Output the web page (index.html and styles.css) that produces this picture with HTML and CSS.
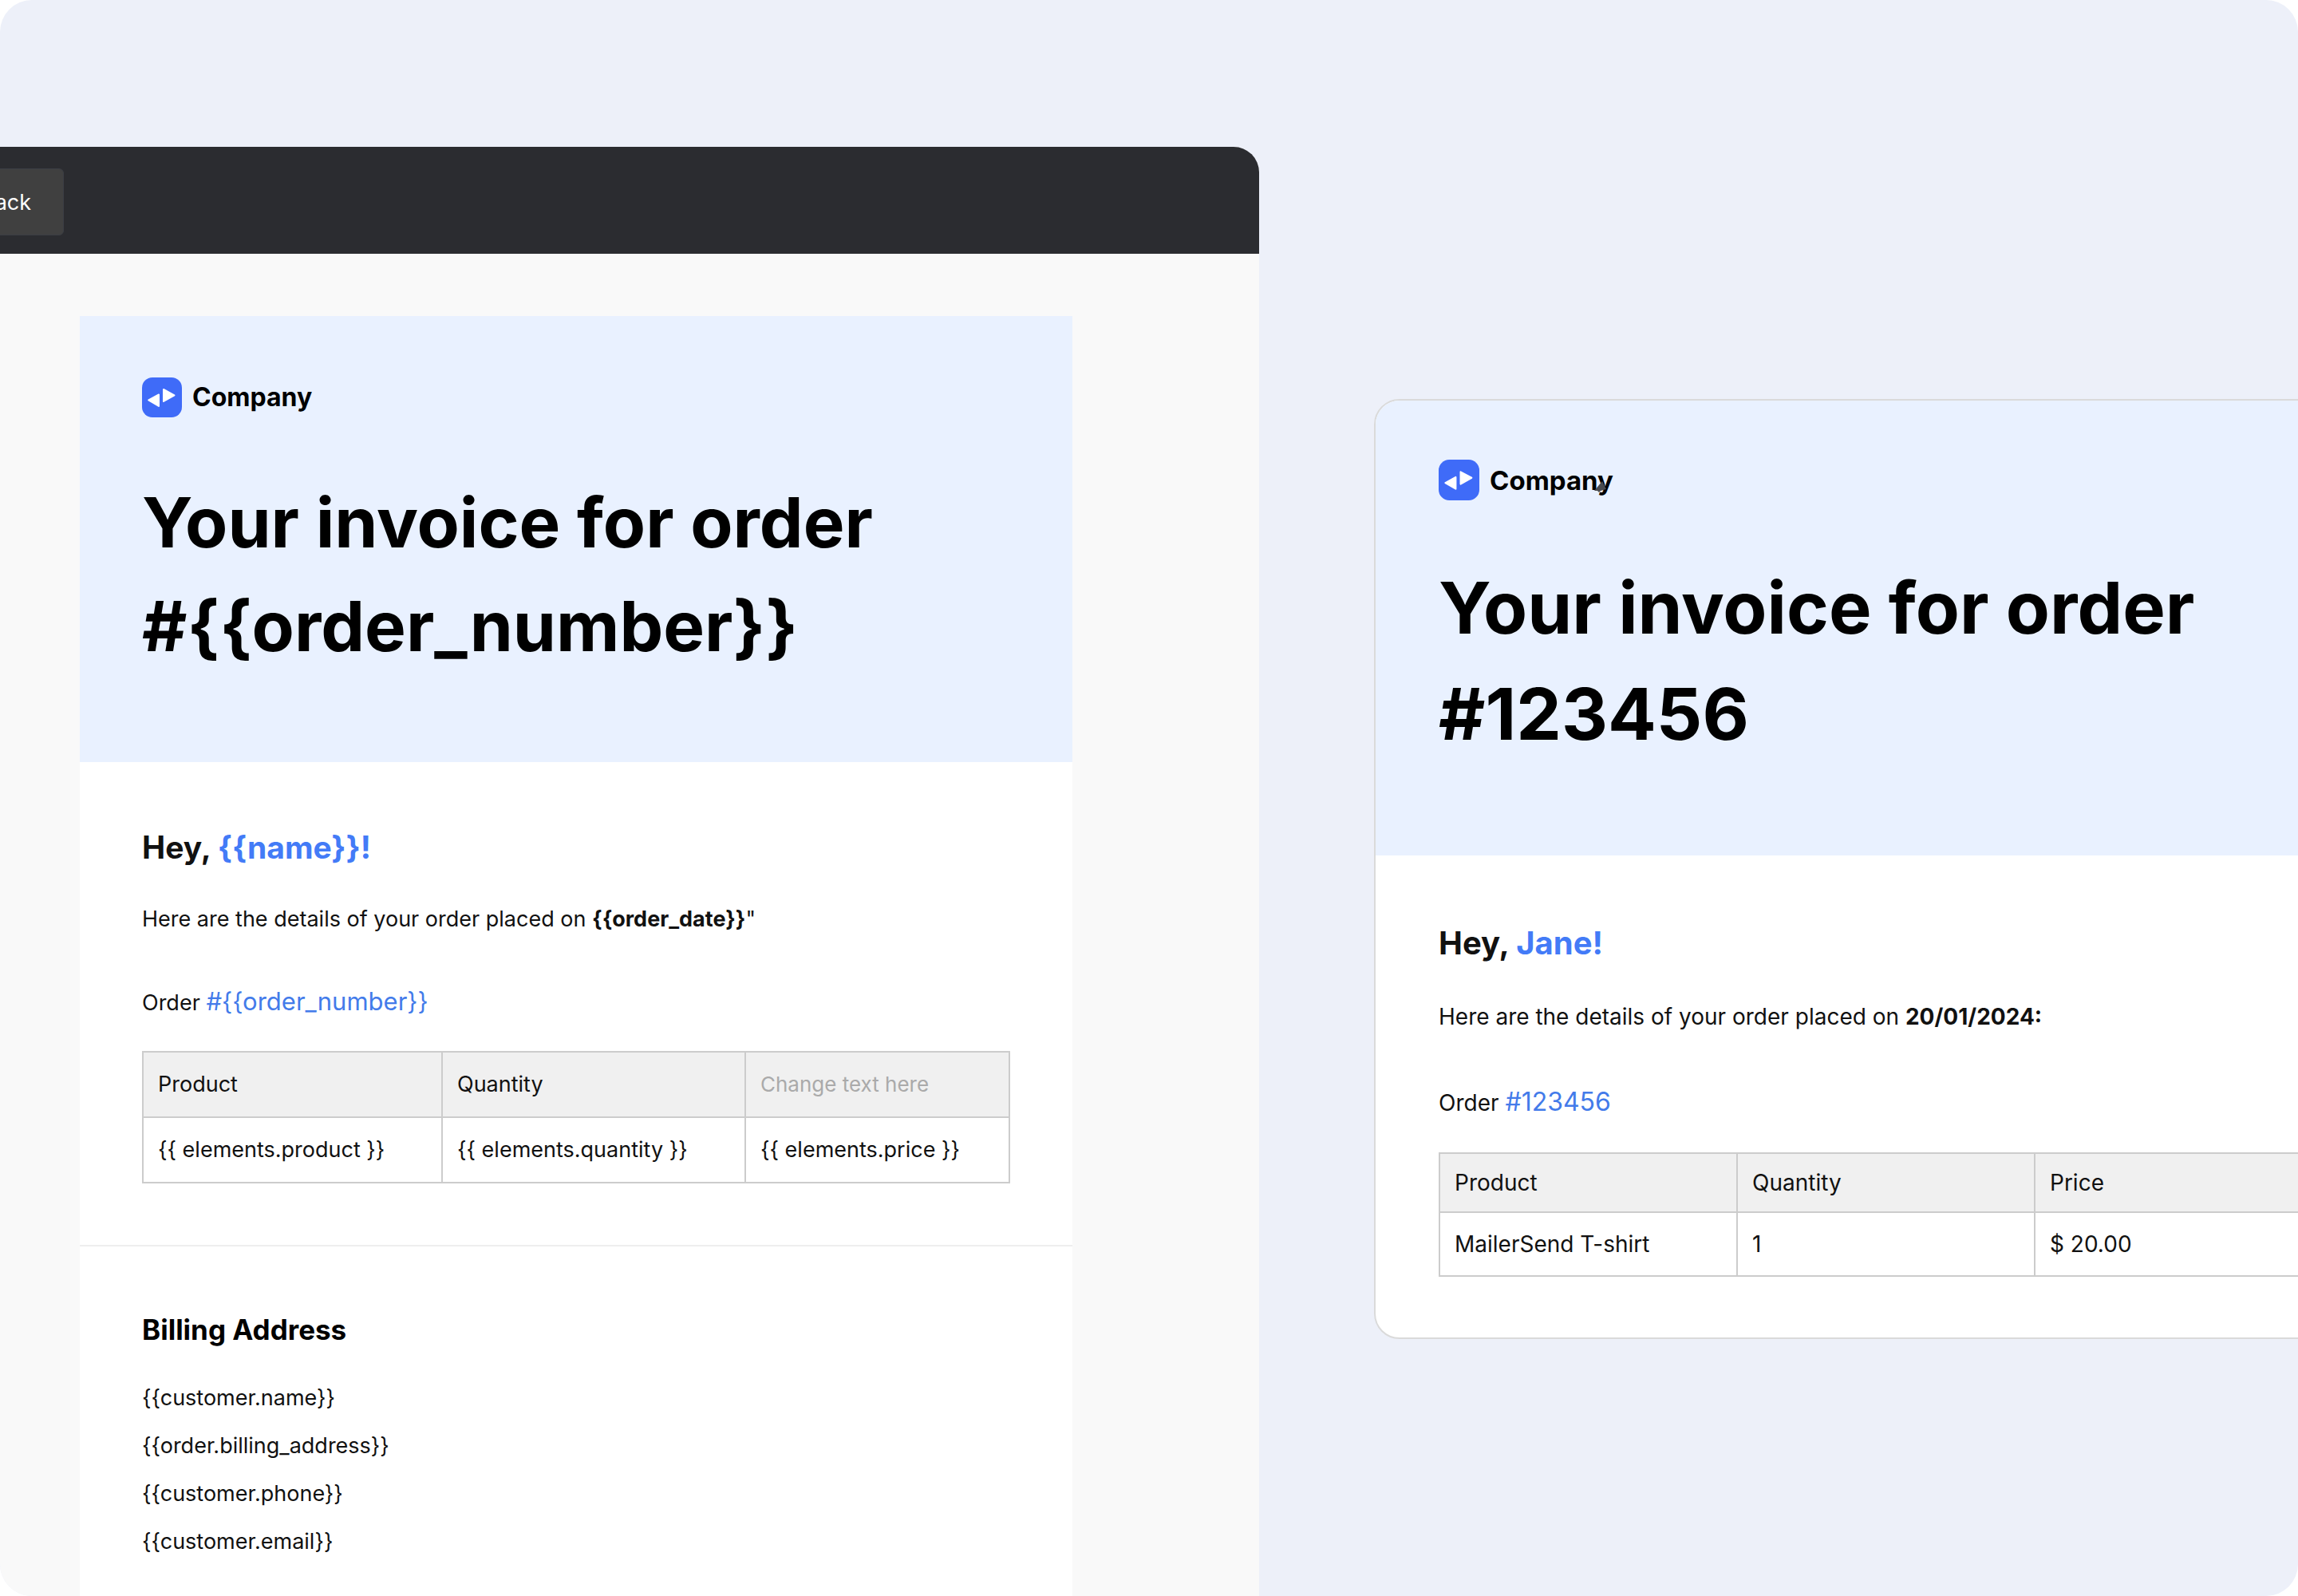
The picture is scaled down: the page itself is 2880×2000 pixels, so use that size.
FILE: index.html
```html
<!DOCTYPE html>
<html lang="en">
<head>
    <meta charset="UTF-8">
    <meta name="viewport" content="width=device-width, initial-scale=1.0">
    <title>Invoice template</title>
    <link rel="stylesheet" href="styles.css">
</head>
<body>
    <main class="stage">
        <!-- Template editor -->
        <section class="editor">
            <header class="toolbar">
                <button type="button" class="back">Back</button>
            </header>
            <article class="email">
                <div class="hero">
                    <div class="brand">
                        <svg class="logo" viewBox="0 0 50 50" aria-hidden="true">
                            <rect width="50" height="50" rx="13" fill="#3f6bf8"/>
                            <path d="M8.200 28.500 L21 21.500 L21 36 Z M27 15 L40.500 22.300 L27 30 Z" fill="#fff" stroke="#fff" stroke-width="2" stroke-linejoin="round"/>
                        </svg>
                        <span>Company</span>
                    </div>
                    <h1>Your invoice for order<br>#{{order_number}}</h1>
                </div>
                <div class="details">
                    <h2>Hey, <span class="accent">{{name}}!</span></h2>
                    <p class="intro">Here are the details of your order placed on <strong>{{order_date}}</strong>"</p>
                    <p class="order">Order <a href="#">#{{order_number}}</a></p>
                    <table>
                        <colgroup>
                            <col class="col-product">
                            <col class="col-quantity">
                            <col>
                        </colgroup>
                        <tr>
                            <th>Product</th>
                            <th>Quantity</th>
                            <th><input type="text" class="cell-input" placeholder="Change text here" aria-label="Column title"></th>
                        </tr>
                        <tr>
                            <td>{{ elements.product }}</td>
                            <td>{{ elements.quantity }}</td>
                            <td>{{ elements.price }}</td>
                        </tr>
                    </table>
                </div>
                <div class="billing">
                    <h3>Billing Address</h3>
                    <p>{{customer.name}}</p>
                    <p>{{order.billing_address}}</p>
                    <p>{{customer.phone}}</p>
                    <p>{{customer.email}}</p>
                </div>
            </article>
        </section>

        <!-- Rendered email -->
        <article class="email preview">
            <div class="hero">
                <div class="brand">
                    <svg class="logo" viewBox="0 0 50 50" aria-hidden="true">
                        <rect width="50" height="50" rx="13" fill="#3f6bf8"/>
                        <path d="M8.200 28.500 L21 21.500 L21 36 Z M27 15 L40.500 22.300 L27 30 Z" fill="#fff" stroke="#fff" stroke-width="2" stroke-linejoin="round"/>
                    </svg>
                    <span>Company</span>
                    <svg class="pointer" viewBox="0 0 16 14" aria-hidden="true">
                        <path d="M0 12 L10 0 L15 10 L8 12 L6 14 L4 12 Z" fill="#4a4c50"/>
                    </svg>
                </div>
                <h1>Your invoice for order<br>#123456</h1>
            </div>
            <div class="details">
                <h2>Hey, <span class="accent">Jane!</span></h2>
                <p class="intro">Here are the details of your order placed on <strong>20/01/2024:</strong></p>
                <p class="order">Order <a href="#">#123456</a></p>
                <table>
                    <colgroup>
                        <col class="col-product">
                        <col class="col-quantity">
                        <col>
                    </colgroup>
                    <tr>
                        <th>Product</th>
                        <th>Quantity</th>
                        <th>Price</th>
                    </tr>
                    <tr>
                        <td>MailerSend T-shirt</td>
                        <td>1</td>
                        <td>$ 20.00</td>
                    </tr>
                </table>
            </div>
        </article>
    </main>
</body>
</html>
```
FILE: styles.css
```css
* {
    box-sizing: border-box;
}

body {
    margin: 0;
    background-color: #fff;
    font-family: Inter, "Liberation Sans", sans-serif;
    color: #111;
}

h1, h2, h3, p {
    margin: 0;
}

.stage {
    display: grid;
    grid-template-columns: 1578fr 1158fr;
    column-gap: 144px;
    align-items: start;
    height: 100vh;
    overflow: hidden;
    border-radius: 40px;
    background-color: #edf0f9;
}

/* Editor */
.editor {
    min-height: 100vh;
    margin-top: 184px;
    border-top-right-radius: 32px;
    background-color: #f9f9f9;
    overflow: hidden;
}

.toolbar {
    display: flex;
    align-items: center;
    height: 134px;
    padding-top: 4px;
    background-color: #2b2c30;
}

.back {
    height: 84px;
    margin-left: -65px;
    padding: 0 40px;
    border: 1px solid #3b3e44;
    border-radius: 6px;
    background-color: #404040;
    color: #fff;
    font-family: inherit;
    font-size: 27px;
    cursor: pointer;
}

/* Email */
.email {
    --text: 27px;
    --link: 31px;
    --brand: 32px;
    --title: 87px;
    --title-line: 130px;
    --greeting: 39px;
    background-color: #fff;
    font-size: var(--text);
    line-height: 60px;
}

.editor .email {
    margin: 78px 234px 0 100px;
}

.hero {
    padding: 77px 78px 105px;
    background-color: #e9f1ff;
    color: #000;
}

.brand {
    display: flex;
    align-items: center;
    gap: 13px;
    height: 50px;
    margin-bottom: 67px;
    font-size: var(--brand);
    font-weight: 700;
}

.logo {
    width: 50px;
    height: 50px;
}

.email h1 {
    font-size: var(--title);
    line-height: var(--title-line);
    white-space: nowrap;
}

.details {
    padding: 77px 78px;
}

.email h2 {
    font-size: var(--greeting);
}

.accent {
    color: #437bf7;
}

.intro {
    margin-top: 30px;
}

.order {
    margin-top: 43px;
}

.order a {
    color: #437bea;
    font-size: var(--link);
    text-decoration: none;
}

table {
    width: 100%;
    margin-top: 30px;
    border-collapse: collapse;
    table-layout: fixed;
}

.col-product {
    width: 375px;
}

.col-quantity {
    width: 380px;
}

th, td {
    height: 82px;
    padding: 0 18px;
    border: 2px solid #ccc;
    font-weight: 400;
    text-align: left;
}

th {
    background-color: #f0f0f0;
}

.cell-input {
    width: 100%;
    padding: 0;
    border: none;
    background: none;
    font-family: inherit;
    font-size: 26px;
}

.cell-input::placeholder {
    color: #aaa;
}

.billing {
    padding: 74px 78px;
    border-top: 2px solid #eee;
}

.billing h3 {
    margin-bottom: 26px;
    color: #000;
    font-size: 35px;
}

/* Preview card, runs off the right side */
.preview {
    --text: 28px;
    --link: 32px;
    --brand: 33px;
    --title: 90px;
    --title-line: 133px;
    --greeting: 40px;
    margin: 500px -120px 0 0;
    border: 2px solid #dadada;
    border-radius: 32px;
    overflow: hidden;
}

.preview .hero {
    padding: 74px 79px 111px;
}

.preview .brand {
    position: relative;
    height: 51px;
    margin-bottom: 68px;
}

.preview .logo {
    width: 51px;
    height: 51px;
}

.pointer {
    position: absolute;
    left: 195px;
    top: 27px;
    width: 16px;
    height: 14px;
}

.preview .details {
    padding: 80px 79px 76px;
}

.preview .intro {
    margin-top: 32px;
}

.preview .order {
    margin-top: 47px;
}

.preview table {
    margin-top: 32px;
}

.preview .col-product,
.preview .col-quantity {
    width: 373px;
}

.preview th {
    height: 74px;
}

.preview td {
    height: 80px;
}
```
